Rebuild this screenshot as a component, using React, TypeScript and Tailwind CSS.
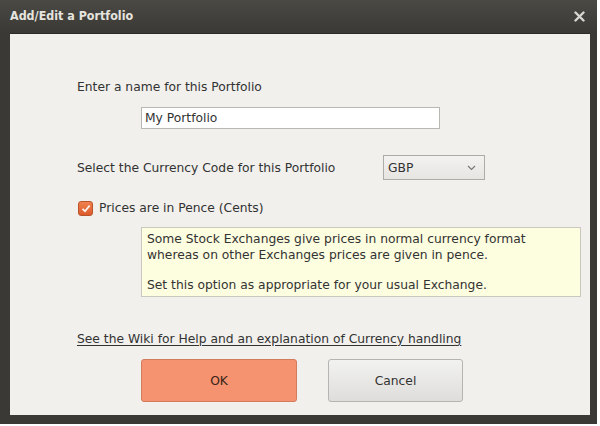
import React from 'react';

const font = { fontFamily: '"DejaVu Sans", sans-serif' };
const titleFont = { fontFamily: '"DejaVu Sans Condensed", "DejaVu Sans", sans-serif' };

export default function App() {
  return (
    <div className="w-[600px] h-[426px] bg-white overflow-hidden">
      <div className="w-[597px] h-[424px] bg-[#3a3935] flex flex-col rounded-tl-[2px]">
        {/* title bar */}
        <div className="h-[33px] shrink-0 flex items-center justify-between pl-[10px] pr-[12px] bg-gradient-to-b from-[#4a4944] to-[#3a3935]">
          <span className="text-[12.4px] font-bold text-[#e6e4df]" style={titleFont}>
            Add/Edit a Portfolio
          </span>
          <svg width="11" height="11" viewBox="0 0 11 11">
            <path d="M1.5 1.5 L9.5 9.5 M9.5 1.5 L1.5 9.5" stroke="#d8d6d0" strokeWidth="2.4" strokeLinecap="round" />
          </svg>
        </div>

        {/* body */}
        <div className="ml-[10px] mr-[7px] mb-[9px] flex-1 bg-[#f1f0ed] border-t border-[#2c2b28] pl-[67px] pt-[45px] text-[12.3px] text-[#333333] leading-[16px]" style={font}>
          <div>Enter a name for this Portfolio</div>

          <div className="ml-[64px] mt-[12px] w-[299px] h-[22px] bg-white border border-[#b9b7b2] flex items-center px-[3px]">
            My Portfolio
          </div>

          <div className="mt-[26px] flex items-center h-[25px]">
            <div className="w-[306px]">Select the Currency Code for this Portfolio</div>
            <div className="w-[102px] h-[25px] border border-[#aeaca7] bg-gradient-to-b from-[#f3f2f0] to-[#e6e5e2] flex items-center justify-between pl-[4px] pr-[8px]">
              <span>GBP</span>
              <svg width="9" height="6" viewBox="0 0 9 6">
                <path d="M1 1 L4.5 4.5 L8 1" fill="none" stroke="#7a7874" strokeWidth="1.2" />
              </svg>
            </div>
          </div>

          <div className="mt-[20px] flex items-center h-[16px]">
            <div className="w-[15px] h-[15px] ml-[1px] rounded-[3px] bg-gradient-to-b from-[#f08150] to-[#dc5a2a] border border-[#b9532a] flex items-center justify-center">
              <svg width="10" height="9" viewBox="0 0 10 9">
                <path d="M1.5 4.8 L4 7.2 L8.6 1.6" fill="none" stroke="#fff5ee" strokeWidth="1.7" />
              </svg>
            </div>
            <span className="ml-[6px]">Prices are in Pence (Cents)</span>
          </div>

          <div className="ml-[64px] mt-[11px] w-[440px] h-[70px] bg-[#fdfddf] border border-[#c9c8bf] px-[5px] pt-[3px]">
            <div>Some Stock Exchanges give prices in normal currency format</div>
            <div>whereas on other Exchanges prices are given in pence.</div>
            <div className="mt-[14px]">Set this option as appropriate for your usual Exchange.</div>
          </div>

          <div className="mt-[34px] underline underline-offset-2">
            See the Wiki for Help and an explanation of Currency handling
          </div>

          <div className="mt-[12px] ml-[64px] flex gap-[31px]">
            <div className="w-[156px] h-[43px] rounded-[3px] bg-[#f5926f] border border-[#d27c5d] flex items-center justify-center text-[#3a2418]">
              OK
            </div>
            <div className="w-[135px] h-[43px] rounded-[3px] bg-gradient-to-b from-[#f2f2f1] to-[#dedddb] border border-[#b5b4b0] flex items-center justify-center">
              Cancel
            </div>
          </div>
        </div>
      </div>
    </div>
  );
}
